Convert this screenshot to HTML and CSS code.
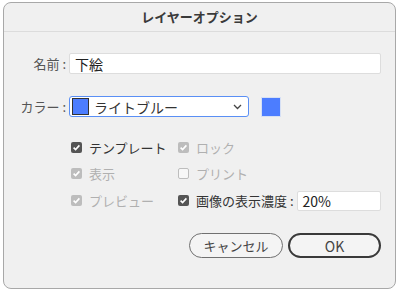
FILE: index.html
```html
<!DOCTYPE html>
<html lang="ja">
<head>
  <meta charset="UTF-8" />
  <title>レイヤーオプション</title>
  <link rel="stylesheet" href="styles.css">
</head>
<body>
  <div class="dialog">
    <div class="title-bar">レイヤーオプション</div>

    <div class="content">
      <div class="field-row name-row">
        <label class="label">名前 :</label>
        <div class="text-input wide">下絵</div>
      </div>

      <div class="field-row color-row">
        <label class="label">カラー :</label>
        <div class="select">
          <span class="chip"></span>
          <span class="select-text">ライトブルー</span>
          <svg class="chevron" width="9" height="6" viewBox="0 0 9 6">
            <path d="M1 1 L4.5 4.5 L8 1" fill="none" stroke="#444" stroke-width="1.3"/>
          </svg>
        </div>
        <span class="swatch"></span>
      </div>

      <div class="options">
        <div class="check checked">
          <span class="box"><svg viewBox="0 0 11 11"><path d="M2.6 5.6 L4.6 7.6 L8.4 3.4" /></svg></span>テンプレート
        </div>
        <div class="check checked disabled">
          <span class="box"><svg viewBox="0 0 11 11"><path d="M2.6 5.6 L4.6 7.6 L8.4 3.4" /></svg></span>ロック
        </div>
        <div class="check checked disabled">
          <span class="box"><svg viewBox="0 0 11 11"><path d="M2.6 5.6 L4.6 7.6 L8.4 3.4" /></svg></span>表示
        </div>
        <div class="check disabled">
          <span class="box empty"></span>プリント
        </div>
        <div class="check checked disabled">
          <span class="box"><svg viewBox="0 0 11 11"><path d="M2.6 5.6 L4.6 7.6 L8.4 3.4" /></svg></span>プレビュー
        </div>
        <div class="check checked">
          <span class="box"><svg viewBox="0 0 11 11"><path d="M2.6 5.6 L4.6 7.6 L8.4 3.4" /></svg></span>画像の表示濃度 :
          <div class="text-input dim">20%</div>
        </div>
      </div>

      <div class="buttons">
        <button class="btn">キャンセル</button>
        <button class="btn primary">OK</button>
      </div>
    </div>
  </div>
</body>
</html>
```

FILE: styles.css
```css
* {
  box-sizing: border-box;
  margin: 0;
  padding: 0;
}

body {
  background: #fff;
  font-family: "Noto Sans CJK JP", "Noto Sans", sans-serif;
  font-size: 13px;
  color: #333;
  padding: 2px 4px 0 3px;
}

.dialog {
  height: 287px;
  background: #f0f0f0;
  border: 1px solid #a8a8a8;
  border-radius: 8px;
  overflow: hidden;
}

.title-bar {
  height: 29px;
  border-bottom: 1px solid #dcdcdc;
  display: flex;
  justify-content: center;
  align-items: center;
  padding-bottom: 1px;
  font-weight: bold;
  font-size: 13px;
  color: #3a3a3a;
}

.content {
  padding: 21px 14px 0 0;
}

.field-row {
  display: flex;
  align-items: center;
}

.label {
  width: 65px;
  text-align: right;
  padding-right: 3px;
  color: #555;
}

.text-input {
  height: 21px;
  background: #fff;
  border: 1px solid #ddd;
  border-radius: 2px;
  display: flex;
  align-items: center;
  padding-left: 5px;
  font-size: 14px;
  color: #222;
}

.text-input.wide {
  flex: 1;
}

.color-row {
  margin-top: 22px;
}

.select {
  width: 180px;
  height: 21px;
  background: #fff;
  border: 1px solid #5a8ff5;
  border-radius: 3px;
  display: flex;
  align-items: center;
  padding: 0 6px 0 2px;
}

.chip {
  width: 17px;
  height: 17px;
  background: #4c7dff;
  border: 1px solid #333;
  margin-right: 5px;
}

.select-text {
  flex: 1;
  font-size: 14px;
  color: #333;
}

.swatch {
  width: 20px;
  height: 20px;
  background: #4c7dff;
  border: 1px solid #d6e0f5;
  margin-left: 12px;
}

.options {
  display: grid;
  grid-template-columns: 107px 1fr;
  grid-auto-rows: 25px;
  margin: 18px 0 0 67px;
  row-gap: 1px;
}

.options .check:nth-child(5),
.options .check:nth-child(6) {
  margin-top: 2px;
}

.check {
  display: flex;
  align-items: center;
  color: #333;
  font-size: 13px;
}

.check.disabled {
  color: #b0b0b0;
}

.box {
  width: 11px;
  height: 11px;
  border-radius: 2px;
  background: #555;
  margin-right: 7px;
  display: flex;
}

.box svg {
  width: 11px;
  height: 11px;
}

.box path {
  fill: none;
  stroke: #fff;
  stroke-width: 1.6;
}

.check.disabled .box {
  background: #bdbdbd;
}

.check.disabled .box.empty {
  background: #f7f7f7;
  border: 1px solid #bdbdbd;
}

.text-input.dim {
  width: 84px;
  height: 20px;
  margin-left: 3px;
  font-size: 14px;
}

.buttons {
  display: flex;
  justify-content: flex-end;
  gap: 5px;
  margin-top: 21px;
}

.btn {
  width: 94px;
  height: 25px;
  border-radius: 13px;
  border: 1px solid #707070;
  background: #f4f4f4;
  font-family: "Noto Sans CJK JP", "Noto Sans", sans-serif;
  font-size: 13px;
  color: #444;
}

.btn.primary {
  width: 93px;
  border: 2px solid #3a3a3a;
  font-size: 14px;
}
```
